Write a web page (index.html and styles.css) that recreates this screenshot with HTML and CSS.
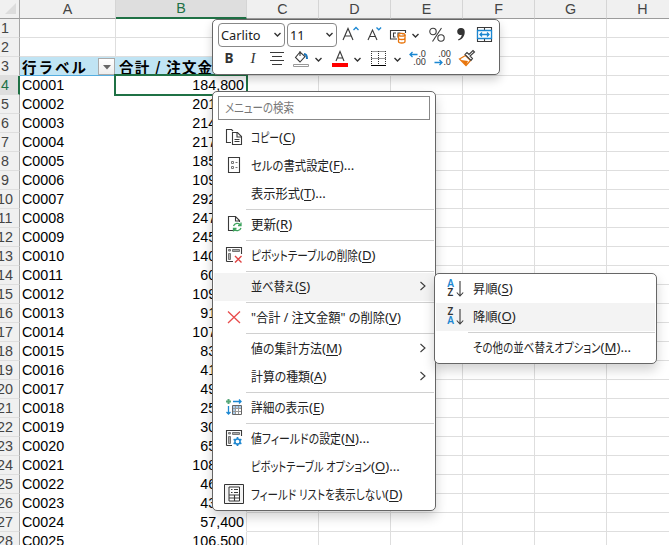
FILE: index.html
```html
<!DOCTYPE html>
<html lang="ja">
<head>
<meta charset="utf-8">
<title>Pivot</title>
<link rel="stylesheet" href="styles.css">
</head>
<body>
<table class="sheet">
<colgroup><col class="c-row"><col class="c-a"><col class="c-b"><col class="c-n"><col class="c-n"><col class="c-n"><col class="c-n"><col class="c-n"><col class="c-n"></colgroup>
<thead><tr><th class="corner"><svg width="12" height="12"><path d="M11 0V11H0Z" fill="#dcdcdc"/></svg></th><th>A</th><th class="on">B</th><th>C</th><th>D</th><th>E</th><th>F</th><th>G</th><th>H</th></tr></thead>
<tbody id="rows"></tbody>
</table>

<div class="toolbar">
  <div class="bar">
    <div class="combo font"><span>Carlito</span><svg class="chev" viewBox="0 0 9 9"><path d="M1.500 3l3 3 3-3"/></svg></div>
    <div class="combo size"><span>11</span><svg class="chev" viewBox="0 0 9 9"><path d="M1.500 3l3 3 3-3"/></svg></div>
    <svg class="i-grow" width="20" height="20"><path class="k" d="M2 15L7 3.500L12 15M3.800 11H10.200"/><path class="b" d="M12.500 5l2.500-2.500L17.500 5"/></svg>
    <svg class="i-shrink" width="18" height="20"><path class="k" d="M2 15L6.500 5L11 15M3.600 11.500H9.400"/><path class="b" d="M10.500 2.500l2.300 2.300 2.300-2.300"/></svg>
    <svg class="i-money" width="19" height="20"><path class="k" d="M8 14H1.500V5.500H16.500V8M7 8H4.500v4h2M9 12.500V8h2.500M14 8v1.500"/><path d="M9.500 10v6.500c0 2 6 2 6 0V10" fill="#fff"/><path class="o" d="M9.500 10v6.500c0 2 6.500 2 6.500 0V10M9.500 13c0 2 6.500 2 6.500 0"/><ellipse class="o" cx="12.800" cy="9.800" rx="3.200" ry="1.400"/></svg>
    <svg class="chev m-money" viewBox="0 0 9 9"><path d="M1.500 3l3 3 3-3"/></svg>
    <svg class="i-pct" width="18" height="20"><circle class="k" cx="5" cy="6.500" r="3.200"/><circle class="k" cx="13" cy="13" r="3.200"/><path class="k" d="M13.500 3L4.500 16.500"/></svg>
    <svg class="i-comma" width="12" height="20"><path d="M6 3a3.500 3.500 0 1 0 .8 6.800C6.600 12 5 13.800 3 14.500l.6 1C8 14 10 10 9.700 6.500A3.600 3.600 0 0 0 6 3Z" fill="#333"/></svg>
    <svg class="i-merge" width="17" height="20"><path class="k" d="M1.500 2.500H15.500V16.500H1.500ZM8.500 2.500V6M8.500 13.500V17"/><path d="M1.500 5.500H15.500V13.500H1.500Z" fill="#fff"/><path class="b" d="M1.500 5.500H15.500V13.500H1.500ZM4 9.500H13M6 7.500L4 9.500l2 2M11 7.500l2 2-2 2"/></svg>
  </div>
  <div class="bar second">
    <b class="glyph bold">B</b><i class="glyph ital">I</i>
    <svg class="i-lines" width="16" height="20"><path class="k" d="M1 3.500H15M3 7.500H13M1 11.500H15M3 15.500H13"/></svg>
    <svg class="i-fill" width="18" height="20"><path class="k" d="M8 2v5M8 3L3.500 8.500 8 13l5-5.500Z"/><path d="M12 5c2 0 3 1 3 5" fill="none" stroke="#1b75bb" stroke-width="2"/><path d="M1.500 15.500H16.500V17.500H1.500Z" fill="#fff" stroke="#999"/></svg>
    <svg class="chev m-fill" viewBox="0 0 9 9"><path d="M1.500 3l3 3 3-3"/></svg>
    <svg class="i-color" width="16" height="20"><path class="k" d="M4 12L8 2.500 12 12M5.500 9H10.500"/><path d="M0 14H16V18H0Z" fill="#f00"/></svg>
    <svg class="chev m-color" viewBox="0 0 9 9"><path d="M1.500 3l3 3 3-3"/></svg>
    <svg class="i-border" width="16" height="20"><path d="M.5 2.500H15M.5 9.500H15M.5 2V16M7.500 2V16M14.500 2V16" fill="none" stroke="#333" stroke-dasharray="1 1"/><path d="M0 16.500H15" stroke="#000"/></svg>
    <svg class="chev m-border" viewBox="0 0 9 9"><path d="M1.500 3l3 3 3-3"/></svg>
    <span class="dec inc"><span><svg width="9" height="7"><path class="b" d="M8.500 3.500H1M3.500 1L1 3.500 3.500 6"/></svg>.0</span><span>.00</span></span>
    <span class="dec"><span>.00</span><span><svg width="9" height="7"><path class="b" d="M.5 3.500H8M5.500 1L8 3.500 5.500 6"/></svg>.0</span></span>
    <svg class="i-brush" width="18" height="20"><path d="M1.500 10l6-3.500 5 5-4.500 5Z" fill="#fff" stroke="#e8750c" stroke-width="1.300"/><path d="M3 11l7 1-2 4.500Z" fill="#e8750c"/><path class="w" d="M7 5.500l6 6 1.500-2-2.500-2.500L16.500 3 15 1.500 11 5.500 9 3.500Z"/></svg>
  </div>
</div>

<div class="menu main">
  <div class="search"><span class="fit" data-w="69">メニューの検索</span></div>
  <div class="item"><svg class="ic" viewBox="0 0 20 20"><path class="k" d="M7 15.500H2.500V2.500H7.500L9 4M8.500 5.500h5l4 4v8h-9Z" /><path class="k" d="M13 5.500V10H17M10.500 12.500h5M10.500 14.500h5"/></svg><span class="t"><span class="fit" data-w="28">コピー</span>(<u>C</u>)</span></div>
  <div class="item"><svg class="ic" viewBox="0 0 20 20"><path class="k" d="M4.500 2.500H15.500V17.500H4.500Z"/><path d="M7.500 6.500h2v2h-2ZM7.500 11.500h2v2h-2ZM11.500 7.500h2M11.500 12.500h2" fill="none" stroke="#777"/></svg><span class="t"><span class="fit" data-w="78">セルの書式設定</span>(<u>F</u>)...</span></div>
  <div class="item"><span class="ic"></span><span class="t"><span class="fit" data-w="49">表示形式</span>(<u>T</u>)...</span></div>
  <hr>
  <div class="item"><svg class="ic" viewBox="0 0 20 20"><path class="k" d="M9 16.500H4.500V2.500h7l4 4V8M11.500 2.500V7H15"/><path d="M9.500 12a4 4 0 0 1 7-1M17 8.500V11.500H14M17 14a4 4 0 0 1-7 1M9.500 17.500V14.500H12.500" fill="none" stroke="#3da35d" stroke-width="1.300"/></svg><span class="t"><span class="fit" data-w="25">更新</span>(<u>R</u>)</span></div>
  <hr>
  <div class="item"><svg class="ic" viewBox="0 0 20 20"><path class="k" d="M2.500 16.500V2.500H17.500V9M2.500 16.500H9"/><path d="M4.500 4.500h2v1.500h-2ZM8.500 4.500h7v2h-7ZM4.500 8.500h2v6h-2Z" fill="#aaa" stroke="#777"/><path d="M11 11l6.500 6.500M17.500 11L11 17.500" stroke="#e04343" stroke-width="1.400"/></svg><span class="t"><span class="fit" data-w="107">ピボットテーブルの削除</span>(<u>D</u>)</span></div>
  <hr>
  <div class="item hot"><span class="ic"></span><span class="t"><span class="fit" data-w="44">並べ替え</span>(<u>S</u>)</span><svg class="arrow" viewBox="0 0 8 10"><path class="k" d="M1.500 1l4.500 4-4.500 4"/></svg></div>
  <hr>
  <div class="item"><svg class="ic" viewBox="0 0 20 20"><path d="M4 4.500l12 11.500M16 4.500L4 16" stroke="#e84c4c" stroke-width="1.300"/></svg><span class="t"><span class="fit" data-w="134">"合計 / 注文金額" の削除</span>(<u>V</u>)</span></div>
  <hr>
  <div class="item"><span class="ic"></span><span class="t"><span class="fit" data-w="71">値の集計方法</span>(<u>M</u>)</span><svg class="arrow" viewBox="0 0 8 10"><path class="k" d="M1.500 1l4.500 4-4.500 4"/></svg></div>
  <div class="item"><span class="ic"></span><span class="t"><span class="fit" data-w="59">計算の種類</span>(<u>A</u>)</span><svg class="arrow" viewBox="0 0 8 10"><path class="k" d="M1.500 1l4.500 4-4.500 4"/></svg></div>
  <hr>
  <div class="item"><svg class="ic" viewBox="0 0 20 20"><path d="M4.500 2V7M2 4.500H7" stroke="#58a77a" stroke-width="2"/><path class="b" d="M9 4.500H17M15 2.500l2 2-2 2M4.500 9V17M2.500 15l2 2 2-2"/><path d="M8.500 8.500h9v9h-9Z" fill="#fff" stroke="#666"/><path d="M9 9h8v3H9ZM9 9h3v8H9Z" fill="#a9cdeb"/><path d="M9 11.500h8M9 14.500h8M11.500 9v8M14.500 9v8" stroke="#999"/></svg><span class="t"><span class="fit" data-w="58">詳細の表示</span>(<u>E</u>)</span></div>
  <hr>
  <div class="item"><svg class="ic" viewBox="0 0 20 20"><path class="k" d="M2.500 17.500V2.500H17.500V8M2.500 17.500H8"/><path d="M4.500 4.500h2v1.500h-2ZM8.500 4.500h7v2h-7ZM4.500 8.500h2v7h-2Z" fill="#aaa" stroke="#777"/><circle cx="13.500" cy="13.500" r="2.600" fill="#fff" stroke="#2088d0" stroke-width="1.500"/><path d="M13.500 9v2M13.500 16v2M9.600 11.200l1.800 1M15.600 14.800l1.800 1M9.600 15.800l1.800-1M15.600 12.200l1.800-1" stroke="#2088d0" stroke-width="1.700"/></svg><span class="t"><span class="fit" data-w="90">値フィールドの設定</span>(<u>N</u>)...</span></div>
  <div class="item"><span class="ic"></span><span class="t"><span class="fit" data-w="120">ピボットテーブル オプション</span>(<u>O</u>)...</span></div>
  <div class="item"><svg class="ic" viewBox="0 0 20 20"><path d="M.5.5h19v19H.5Z" fill="#f3f3f3" stroke="#333"/><path d="M5 3h10.500v14H5Z" fill="#fff" stroke="#333"/><path class="k" d="M7 5.500h1.500M10 5.500h4M7 8.500h1.500M10 8.500h4M5 11h10.500M5 14h10.500M10.500 11v6"/></svg><span class="t"><span class="fit" data-w="134">フィールド リストを表示しない</span>(<u>D</u>)</span></div>
</div>

<div class="menu sub">
  <div class="item"><span class="az"><b class="blue">A</b><b>Z</b></span><svg class="down" viewBox="0 0 8 18"><path class="k" d="M4 1V16M.8 12.500L4 16l3.200-3.500"/></svg><span class="t"><span class="fit" data-w="24.500">昇順</span>(<u>S</u>)</span></div>
  <div class="item hot"><span class="az"><b>Z</b><b class="blue">A</b></span><svg class="down" viewBox="0 0 8 18"><path class="k" d="M4 1V16M.8 12.500L4 16l3.200-3.500"/></svg><span class="t"><span class="fit" data-w="24.500">降順</span>(<u>O</u>)</span></div>
  <hr>
  <div class="item"><span class="az"></span><span class="down"></span><span class="t"><span class="fit" data-w="127.500">その他の並べ替えオプション</span>(<u>M</u>)...</span></div>
</div>
<script src="sheet.js"></script>
</body>
</html>
```
FILE: styles.css
```css
* { box-sizing: border-box; }
body { margin: 0; width: 669px; height: 545px; overflow: hidden; position: relative; background: #fff; font-family: "Liberation Sans", sans-serif; }
svg { display: block; flex: none; overflow: visible; }
.k { fill: none; stroke: #3a3a3a; stroke-width: 1.1; }
.w { fill: #fff; stroke: #3a3a3a; stroke-width: 1.1; }
.b { fill: none; stroke: #1b87d2; stroke-width: 1.3; }
.o { fill: none; stroke: #e8750c; stroke-width: 1.3; }

.sheet { table-layout: fixed; width: 679px; border-collapse: separate; border-spacing: 0; font-size: 14.3px; line-height: 17px; color: #000; }
.c-row { width: 20px; } .c-a { width: 96px; } .c-b { width: 131px; } .c-n { width: 72px; }
th, td { padding: 0; height: 19px; overflow: hidden; white-space: nowrap; border-right: 1px solid #dedede; border-bottom: 1px solid #dedede; }
thead th { background: #f0f0f0; color: #444; font-weight: 400; border-bottom-color: #9c9c9c; border-right-color: #d5d5d5; }
thead th.on { background: #dedede; color: #1f7145; border-bottom: 2px solid #1f7145; }
.corner svg { margin-left: 5px; }
thead th.corner, tbody th { border-right-color: #a6a6a6; }
tbody th { background: #f0f0f0; color: #444; font-weight: 400; padding-top: 1px; }
tbody th span { display: block; width: 24px; margin-left: -7px; text-align: center; }
tbody th.on { background: #dedede; color: #1f7145; border-right: 2px solid #1f7145; }
td.lab { padding-left: 2px; border-color: transparent; padding-top: 1px; }
td.num { padding-right: 2px; text-align: right; border-bottom-color: transparent; padding-top: 1px; }
td.head { background: #c0e4f4; border-color: #c0e4f4; border-bottom-color: #55aee0; font: 700 14.5px/17px "Noto Sans CJK JP", sans-serif; }
.headbox { display: flex; height: 18px; align-items: center; justify-content: space-between; padding-left: 2px; letter-spacing: 2px; }
.headbox.two { letter-spacing: 1.2px; padding-left: 3px; }
.filter { width: 17px; height: 17px; border: 1px solid #aaa; background: linear-gradient(#fff, #eee); padding: 6px 0 0 4px; }
.sel { position: absolute; left: 114px; top: 74px; width: 134px; height: 22px; border: 2px solid #1f7145; }

.toolbar { position: absolute; left: 212px; top: 19px; width: 288px; height: 56px; background: #fff; border: 1px solid #666; border-radius: 5px; box-shadow: 0 5px 10px rgba(0,0,0,.18); }
.bar { display: flex; align-items: center; height: 24px; margin: 3px 0 0 5px; }
.bar.second { margin: 0 0 0 5px; }
.combo { display: flex; align-items: center; justify-content: space-between; height: 24px; border: 1px solid #888; border-radius: 4px; font: 12.8px "Noto Sans", sans-serif; color: #222; padding: 0 2px 1px 2px; }
.font { width: 67px; } .size { width: 50px; margin-left: 2px; }
.chev { width: 9px; height: 9px; }
.chev path { fill: none; stroke: #333; stroke-width: 1.4; }
.i-grow { margin-left: 4px; } .i-shrink { margin-left: 5px; } .i-money { margin-left: 5px; }
.m-money { margin-left: 3px; } .i-pct { margin-left: 8px; } .i-comma { margin-left: 9px; } .i-merge { margin-left: 9px; }
.glyph { width: 22px; text-align: center; font: 700 13.5px "Noto Sans", sans-serif; color: #333; }
.bold { margin-top: -2px; }
.glyph.ital { font: italic 15px "Liberation Serif", serif; margin: -2px 0 0 2px; }
.i-lines { margin-left: 5px; } .i-fill { margin-left: 7px; } .m-fill { margin-left: 4px; } .i-color { margin-left: 9px; }
.m-color { margin-left: 5px; } .i-border { margin-left: 9px; } .m-border { margin-left: 6px; }
.dec { width: 17px; margin: -2px 0 0 8px; display: flex; flex-direction: column; align-items: flex-end; font: 9px/8px "Noto Sans", sans-serif; color: #333; }
.inc { margin-left: 8px; width: 16px; }
.dec span { display: flex; align-items: center; height: 8px; }
.i-brush { margin-left: 7px; }

.menu { position: absolute; background: #fff; border: 1px solid #666; border-radius: 5px; padding: 1px; box-shadow: 0 6px 12px rgba(0,0,0,.18); font: 13.2px/20px "Noto Sans", "Noto Sans CJK JP", sans-serif; color: #222; }
.main { left: 212px; top: 91px; width: 224px; height: 420px; }
.sub { left: 434px; top: 273px; width: 223px; height: 91px; }
.search { height: 24px; margin: 3px 4px 4px 4px; border: 1px solid #888; padding-left: 6px; line-height: 20px; color: #777; }
.item { display: flex; align-items: center; height: 28px; }
.hot { background: #f3f3f3; }
.ic { width: 20px; height: 20px; margin-left: 10px; flex: none; position: relative; top: -1px; }
.t { display: flex; align-items: baseline; margin: -2px 0 0 7px; white-space: nowrap; }
.t u { text-underline-offset: 2px; text-decoration-thickness: 1px; }
.fit { display: inline-block; white-space: nowrap; font-size: 13px; font-feature-settings: "palt"; transform-origin: 0 50%; }
.arrow { width: 8px; height: 10px; margin: 0 7px 3px auto; }
.menu hr { margin: 0 0 0 32px; height: 3px; border: 0; background: linear-gradient(#fff 1px, #d0d0d0 1px, #d0d0d0 2px, #fff 2px); }
.az { width: 9px; margin: -2px 0 0 10px; display: flex; flex-direction: column; font: 10px/9px "Noto Sans", sans-serif; color: #333; }
.az b { text-align: center; font-weight: 600; }
.az .blue { color: #1b87d2; }
.down { width: 8px; height: 18px; margin-left: 1px; }
.sub .t { margin-left: 9px; }
```
FILE: sheet.js
```js
const values = ["184,800", "201,600", "214,200", "217,000", "185,400", "109,200", "292,600", "247,800", "245,000", "140,400", "60,200", "109,800", "91,000", "107,400", "83,600", "41,200", "49,000", "25,800", "30,400", "65,000", "108,600", "46,200", "43,800", "57,400", "106,500"];
const blank = "<td></td>".repeat(6);
let html = "";
for (let r = 1; r <= 28; r++) {
  let cells = "<td></td><td></td>";
  if (r === 3) {
    cells = '<td class="head"><div class="headbox">行ラベル<span class="filter"><svg width="8" height="5"><path d="M0 0H8L4 4.500Z" fill="#666"/></svg></span></div></td><td class="head"><div class="headbox two">合計 / 注文金額</div></td>';
  } else if (r > 3) {
    cells = `<td class="lab">C${String(r - 3).padStart(4, "0")}</td><td class="num">${values[r - 4]}</td>`;
  }
  html += `<tr><th${r === 4 ? ' class="on"' : ""}><span>${r}</span></th>${cells}${blank}</tr>`;
}
document.getElementById("rows").innerHTML = html;
const sel = document.createElement("div");
sel.className = "sel";
document.querySelector(".sheet").after(sel);

for (const el of document.querySelectorAll(".fit")) {
  const target = parseFloat(el.dataset.w);
  const natural = el.getBoundingClientRect().width;
  el.style.transform = `scaleX(${target / natural})`;
  el.style.width = `${natural}px`;
  el.style.marginRight = `${target - natural}px`;
}
```
